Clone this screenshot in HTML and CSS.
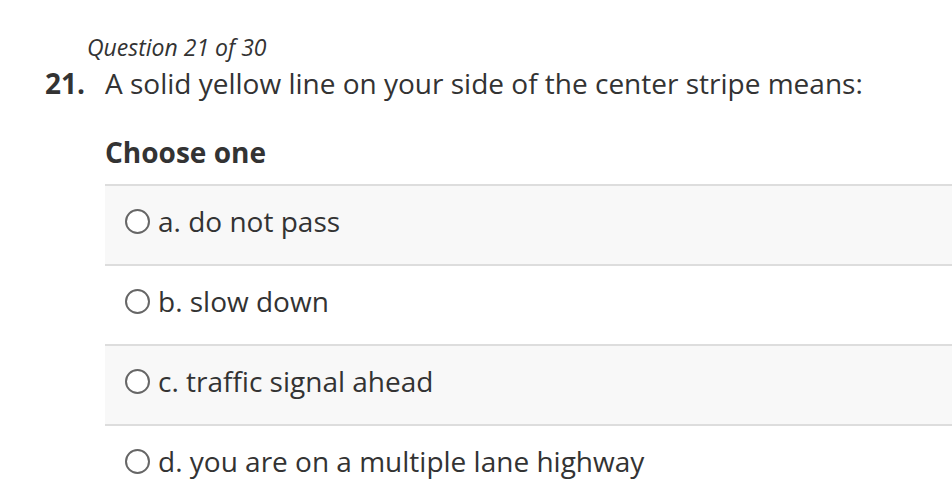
FILE: index.html
```html
<!DOCTYPE html>
<html>
<head>
<meta charset="utf-8">
<link rel="stylesheet" href="styles.css">
</head>
<body>
<div class="quiz">
  <div class="counter">Question 21 of 30</div>
  <div class="question">
    <span class="num">21.</span>
    <span class="text">A solid yellow line on your side of the center stripe means:</span>
  </div>
  <div class="answers">
    <div class="prompt">Choose one</div>
    <div class="options">
      <label class="option shaded"><span class="radio"></span><span>a. do not pass</span></label>
      <label class="option"><span class="radio"></span><span>b. slow down</span></label>
      <label class="option shaded"><span class="radio"></span><span>c. traffic signal ahead</span></label>
      <label class="option"><span class="radio"></span><span>d. you are on a multiple lane highway</span></label>
    </div>
  </div>
</div>
</body>
</html>
```

FILE: styles.css
```css
html, body {
  margin: 0;
  padding: 0;
  background: #fff;
}
body {
  font-family: "Open Sans", "Liberation Sans", sans-serif;
  color: #333;
}
.quiz {
  padding-top: 31px;
}
.counter {
  font-style: italic;
  font-size: 23px;
  line-height: 32px;
  padding-left: 87px;
}
.question {
  display: flex;
  font-size: 28px;
  line-height: 38px;
  padding-left: 45px;
  margin-top: 1px;
}
.num {
  width: 60px;
  flex: none;
  font-weight: 700;
  white-space: nowrap;
}
.answers {
  padding-left: 105px;
  margin-top: 32px;
}
.prompt {
  font-weight: 700;
  font-size: 28px;
  line-height: 36px;
  margin-bottom: 14px;
}
.options {
  border-top: 2px solid #ddd;
}
.option {
  display: flex;
  align-items: center;
  gap: 8px;
  box-sizing: border-box;
  height: 80px;
  padding: 0 0 8px 20px;
  font-size: 28px;
  border-bottom: 2px solid #ddd;
  background: #fff;
}
.option.shaded {
  background: #f8f8f8;
}
.radio {
  width: 21px;
  height: 21px;
  border: 2px solid #666;
  border-radius: 50%;
  background: #fff;
  flex: none;
}
```
